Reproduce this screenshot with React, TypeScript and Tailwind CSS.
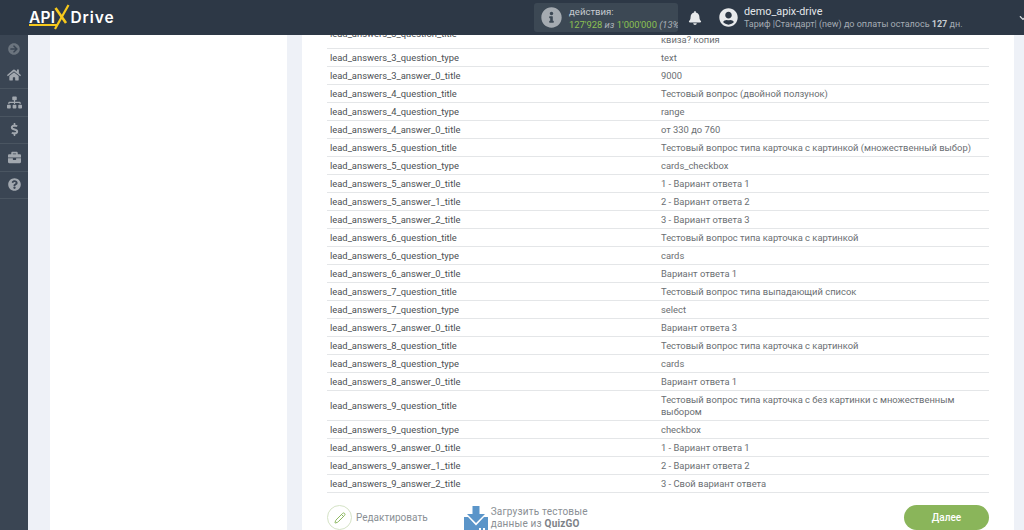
import { FaArrowCircleRight, FaBell, FaBriefcase, FaChevronDown, FaDollarSign, FaHome, FaInfoCircle, FaQuestionCircle, FaSitemap, FaUserCircle } from "react-icons/fa";
import { Pencil } from "lucide-react";

const rows: [string, React.ReactNode][] = [
    ["lead_answers_3_question_title", <>Как вам результаты<br />квиза? копия</>],
    ["lead_answers_3_question_type", "text"],
    ["lead_answers_3_answer_0_title", "9000"],
    ["lead_answers_4_question_title", "Тестовый вопрос (двойной ползунок)"],
    ["lead_answers_4_question_type", "range"],
    ["lead_answers_4_answer_0_title", "от 330 до 760"],
    ["lead_answers_5_question_title", "Тестовый вопрос типа карточка с картинкой (множественный выбор)"],
    ["lead_answers_5_question_type", "cards_checkbox"],
    ["lead_answers_5_answer_0_title", "1 - Вариант ответа 1"],
    ["lead_answers_5_answer_1_title", "2 - Вариант ответа 2"],
    ["lead_answers_5_answer_2_title", "3 - Вариант ответа 3"],
    ["lead_answers_6_question_title", "Тестовый вопрос типа карточка с картинкой"],
    ["lead_answers_6_question_type", "cards"],
    ["lead_answers_6_answer_0_title", "Вариант ответа 1"],
    ["lead_answers_7_question_title", "Тестовый вопрос типа выпадающий список"],
    ["lead_answers_7_question_type", "select"],
    ["lead_answers_7_answer_0_title", "Вариант ответа 3"],
    ["lead_answers_8_question_title", "Тестовый вопрос типа карточка с картинкой"],
    ["lead_answers_8_question_type", "cards"],
    ["lead_answers_8_answer_0_title", "Вариант ответа 1"],
    ["lead_answers_9_question_title", "Тестовый вопрос типа карточка с без картинки с множественным выбором"],
    ["lead_answers_9_question_type", "checkbox"],
    ["lead_answers_9_answer_0_title", "1 - Вариант ответа 1"],
    ["lead_answers_9_answer_1_title", "2 - Вариант ответа 2"],
    ["lead_answers_9_answer_2_title", "3 - Свой вариант ответа"],
];

const menu = [
    { icon: FaHome, size: "text-[14px]" },
    { icon: FaSitemap, size: "text-[15px]" },
    { icon: FaDollarSign, size: "text-[13px]" },
    { icon: FaBriefcase, size: "text-[13px]" },
    { icon: FaQuestionCircle, size: "text-[13px]" },
];

function Logo() {
    return (
        <div className="relative flex items-center h-[35px] ml-[29px] w-[99px] font-['Inter',sans-serif] font-semibold text-white text-[15.5px] shrink-0">
            <span className="tracking-[0.3px]">API</span>
            <svg className="w-[16px] h-[26px] -ml-[1px] mb-[1px] shrink-0" viewBox="0 0 16 26">
                <path d="M1.5 4 L12 19" stroke="#f7c91c" strokeWidth="2.6" fill="none" />
                <path d="M14.5 1 L1 25" stroke="#f7c91c" strokeWidth="2.2" fill="none" />
            </svg>
            <span className="tracking-[0.9px]">Drive</span>
            <div className="absolute left-0 top-[24px] w-[28px] h-[2px] bg-[#f7c91c]" />
        </div>
    );
}

function Header() {
    return (
        <header className="h-[35px] shrink-0 bg-[#2d3846] flex items-center relative z-10 overflow-hidden">
            <Logo />
            <div className="ml-[406px] w-[144px] h-[29px] rounded-[3px] bg-[#3c4854] flex items-center overflow-hidden shrink-0">
                <FaInfoCircle className="ml-[7px] mr-[7px] text-[21px] text-[#a5abb1] shrink-0" />
                <div className="leading-[13px] whitespace-nowrap">
                    <div className="text-[9.6px] text-[#c6cbd0]">действия:</div>
                    <div className="text-[9.4px]">
                        <span className="text-[#8cc152]">127'928</span>
                        <span className="text-[#aab0b6] italic"> из </span>
                        <span className="text-[#8cc152]">1'000'000</span>
                        <span className="text-[#aab0b6] italic"> (13%)</span>
                    </div>
                </div>
            </div>
            <FaBell className="ml-[10px] text-[14px] text-[#e8eaec] shrink-0" />
            <FaUserCircle className="ml-[17px] text-[19px] text-[#e8eaec] shrink-0" />
            <div className="ml-[6px] whitespace-nowrap">
                <div className="text-[10.8px] leading-[14px] text-[#e4e7ea]">demo_apix-drive</div>
                <div className="text-[9px] leading-[11px] text-[#a5acb4]">
                    Тариф |Стандарт| (new) до оплаты осталось <b className="text-[#c6cbd0]">127</b> дн.
                </div>
            </div>
            <FaChevronDown className="ml-auto -mr-[3px] text-[8px] text-[#d5d8dc] shrink-0" />
        </header>
    );
}

function Sidebar() {
    return (
        <aside className="w-[28px] shrink-0 bg-[#3a4553] flex flex-col items-stretch text-[#a2a8af]">
            <div className="h-[26px] mt-[1px] flex items-center justify-center">
                <FaArrowCircleRight className="text-[12px] text-[#6b747e]" />
            </div>
            {menu.map((m, i) => (
                <div key={i} className={`h-[27.4px] flex items-center justify-center border-b border-[#4a5561] ${m.size}`}>
                    <m.icon />
                </div>
            ))}
        </aside>
    );
}

function Footer() {
    return (
        <div className="flex items-center h-[25px] mt-[12px]">
            <div className="w-[25px] h-[25px] rounded-full border border-[#d5e3c6] flex items-center justify-center text-[#8cb860] shrink-0">
                <Pencil size={12} strokeWidth={2} />
            </div>
            <span className="ml-[4px] text-[10px] text-[#8a8f94]">Редактировать</span>
            <svg className="ml-[36px] w-[24px] h-[30px] mt-[5px] shrink-0" viewBox="0 0 24 30">
                <path d="M8.5 1 H15.5 V9 H21 L12 18 L3 9 H8.5 Z" fill="#5b95c9" />
                <path d="M0 12 H4 L12 20.5 L20 12 H24 V30 H0 Z" fill="#5b95c9" />
                <rect x="15" y="23" width="2" height="2" fill="#fff" />
                <rect x="19" y="23" width="2" height="2" fill="#fff" />
            </svg>
            <div className="ml-[3px] text-[10px] leading-[12px] text-[#8a8f94] tracking-[0.2px] whitespace-nowrap">
                <div>Загрузить тестовые</div>
                <div>данные из <b className="font-bold text-[#7d8287]">QuizGO</b></div>
            </div>
            <button className="ml-auto w-[85px] h-[25px] rounded-full bg-[#8ab55a] text-white text-[10px] font-medium">Далее</button>
        </div>
    );
}

export default function App() {
    return (
        <div className="w-[1024px] h-[530px] overflow-hidden flex flex-col bg-[#eef1f7] font-['Roboto',sans-serif]">
            <Header />
            <div className="flex flex-1 min-h-0">
                <Sidebar />
                <main className="flex flex-1 min-w-0 pl-[22px] pr-[10px] gap-[15px] overflow-hidden">
                    <div className="w-[237px] bg-white shrink-0" />
                    <div className="w-[712px] bg-white px-[25px] shrink-0 overflow-hidden">
                        <div className="-mt-[16px]">
                            {rows.map(([k, v]) => (
                                <div key={k} className="flex border-b border-[#e4e6e8] py-[2.5px] text-[9.4px] leading-[12px] items-center">
                                    <div className="w-[334px] pl-[3px] shrink-0 text-[#4b4f53]">{k}</div>
                                    <div className="flex-1 text-[#6a6e72]">{v}</div>
                                </div>
                            ))}
                            <Footer />
                        </div>
                    </div>
                </main>
            </div>
        </div>
    );
}
